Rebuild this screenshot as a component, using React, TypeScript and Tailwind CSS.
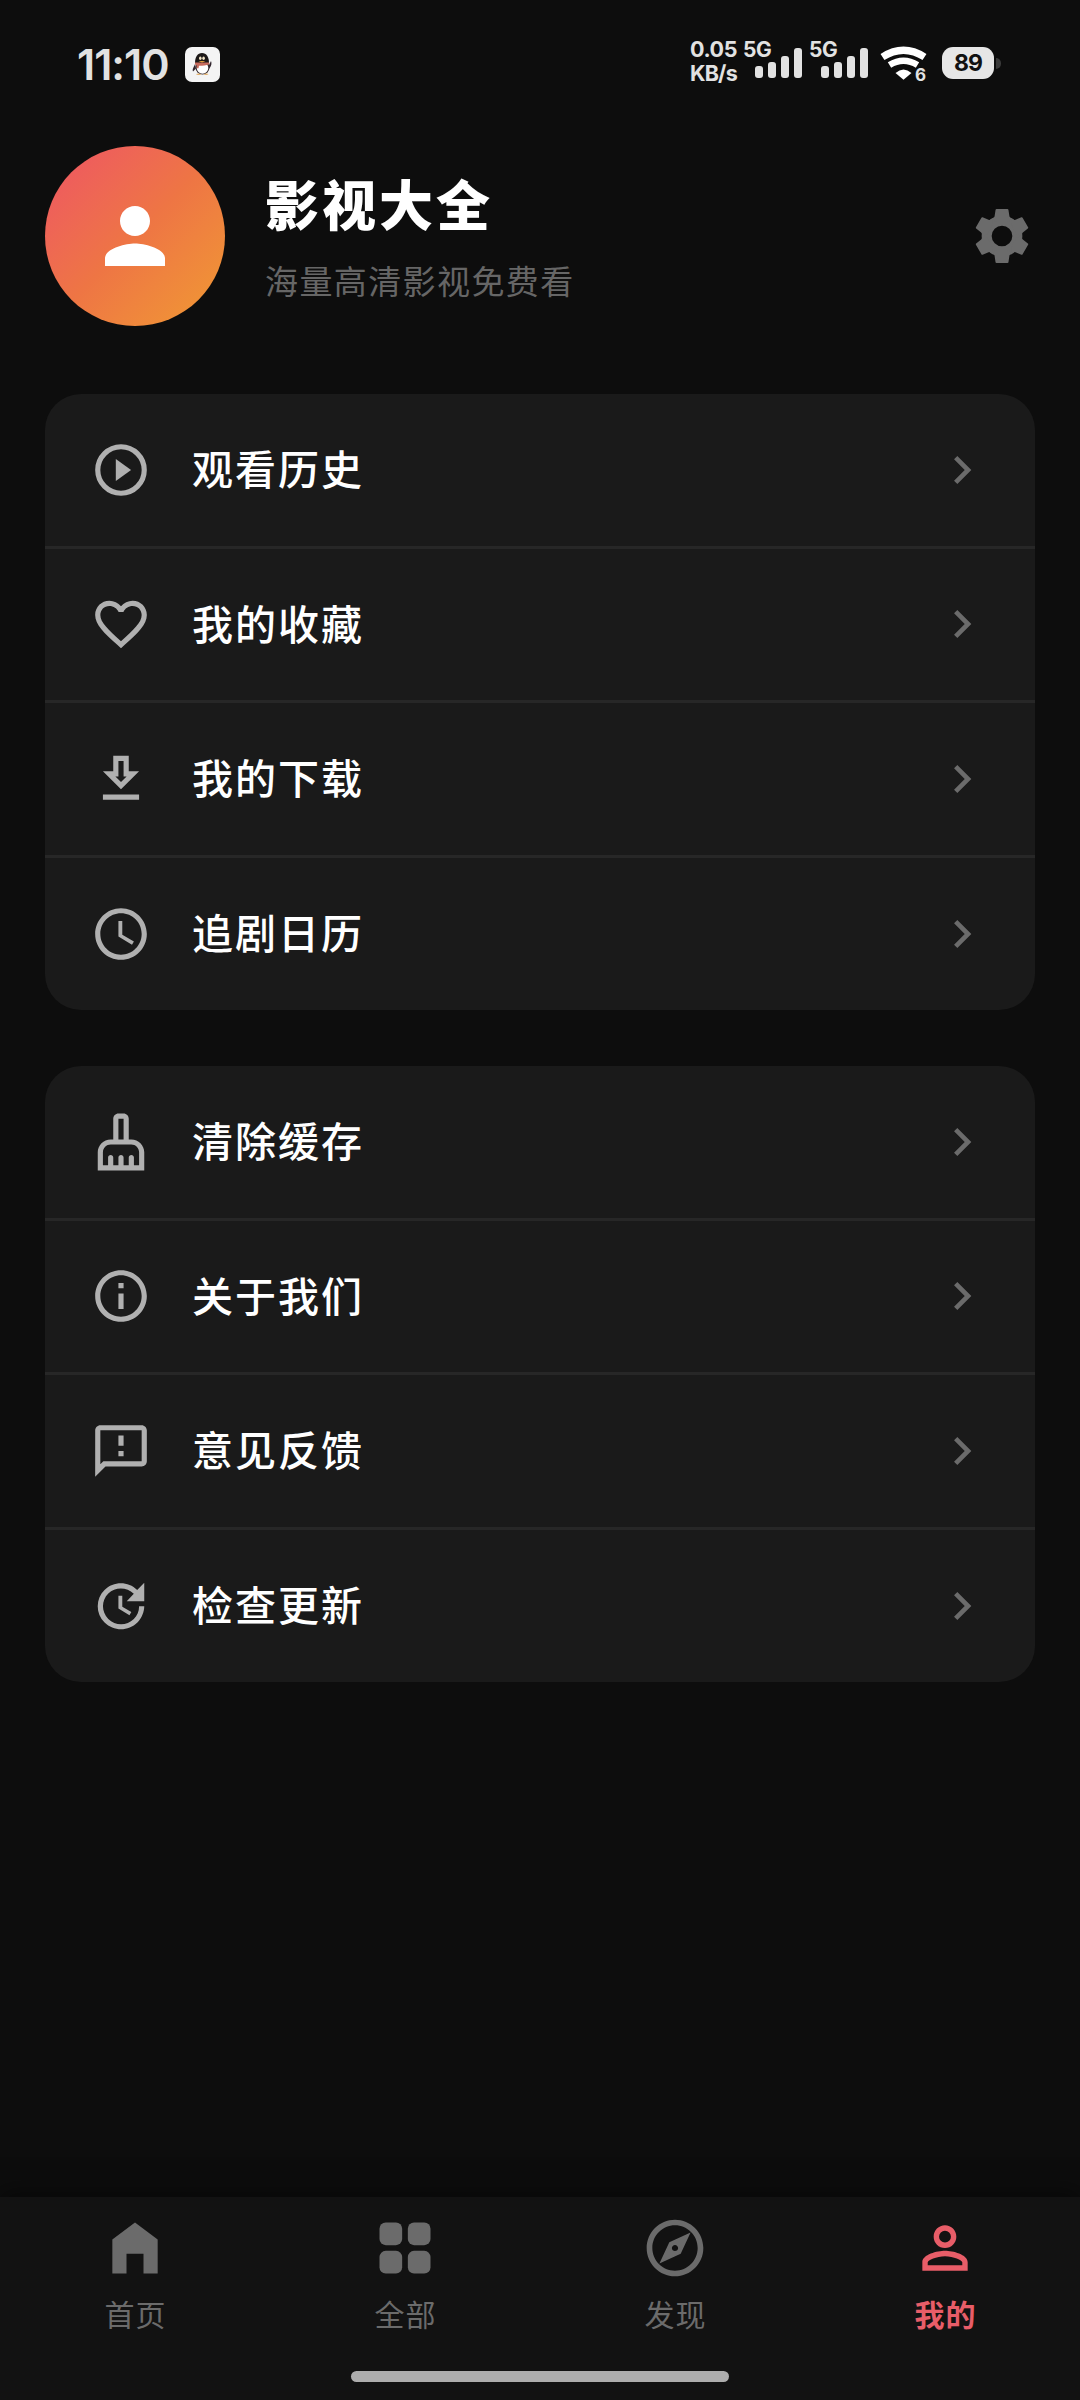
import type { ReactNode } from 'react';
import type { IconType } from 'react-icons';
import {
  MdAccessTime,
  MdChevronRight,
  MdFavoriteBorder,
  MdOutlineCleaningServices,
  MdOutlineExplore,
  MdOutlineFeedback,
  MdOutlineInfo,
  MdPerson,
  MdPersonOutline,
  MdUpdate,
} from 'react-icons/md';

interface MenuItem {
  label: string;
  icon: ReactNode;
}

function DownloadIcon() {
  return (
    <svg viewBox="0 0 24 24" fill="currentColor" className="size-[62px]">
      <path d="M19 9h-4V3H9v6H5l7 7 7-7zm-8 2V5h2v6h1.17L12 13.17 9.83 11H11zm-6 7h14v2H5z" />
    </svg>
  );
}

function PlayIcon() {
  return (
    <svg viewBox="0 0 24 24" className="size-[62px]">
      <circle cx="12" cy="12" r="9" fill="none" stroke="currentColor" strokeWidth="2" />
      <path d="M10 7.7v8.6l5.9-4.3z" fill="currentColor" />
    </svg>
  );
}

function GearIcon() {
  return (
    <svg viewBox="-12 -12 24 24" fill="currentColor" className="size-[66px] text-[#6b6b6b]">
      <circle r="5.58" fill="none" stroke="currentColor" strokeWidth="3.65" />
      {[0, 60, 120, 180, 240, 300].map((angle) => (
        <path key={angle} transform={`rotate(${angle})`} d="M-3.700-6.200Q-2.800-6.500-2.700-7.200L-2.350-9.500Q-2.300-9.800-2-9.800H2Q2.300-9.800 2.350-9.500L2.700-7.200Q2.800-6.500 3.700-6.200L2-5H-2z" />
      ))}
    </svg>
  );
}

function HomeIcon() {
  return (
    <svg viewBox="0 0 24 24" fill="currentColor" className="size-[68px]">
      <path d="M4 21V9l8-6 8 6v12h-5v-7H9v7z" />
    </svg>
  );
}

function GridIcon() {
  return (
    <svg viewBox="0 0 24 24" fill="currentColor" className="size-[68px]">
      <rect x="3" y="3" width="8" height="8" rx="2.2" />
      <rect x="13" y="3" width="8" height="8" rx="2.2" />
      <rect x="3" y="13" width="8" height="8" rx="2.2" />
      <rect x="13" y="13" width="8" height="8" rx="2.2" />
    </svg>
  );
}

function PenguinIcon() {
  return (
    <svg viewBox="0 0 35 35" className="size-[35px]">
      <rect width="35" height="35" rx="7" fill="#f4f4f4" />
      <path d="M10 17c-1 3-3 5-2 7.500l3-3zM24 18l2-4c1 2 .5 5-2 8z" fill="#30242c" />
      <ellipse cx="17.5" cy="20.5" rx="7" ry="7" fill="#33272b" />
      <ellipse cx="17.5" cy="21" rx="5.800" ry="5.800" fill="#fff" />
      <path d="M10 16c0-6 2.500-10 7-10s7 4 7 10z" fill="#1d1918" />
      <path d="M10 15.500h14l.5 1.700c-4 1.300-8 1.600-10.500 1.500l-.5 2.500h-1.700l-.3-3-1.500-.8z" fill="#c76a5c" />
      <ellipse cx="15.300" cy="11.300" rx="1.300" ry="1.700" fill="#f3e6c8" />
      <ellipse cx="18.600" cy="11.300" rx="1.300" ry="1.700" fill="#f3e6c8" />
      <path d="M13.500 14h7l-3.500 1.400z" fill="#e0a13c" />
      <path d="M11 27c2-1 4-.5 5.500.3-1.500 1-4.500 1-5.500-.3zM18.500 27.300c1.500-.8 3.500-1.300 5-.3-1 1.300-4 1.300-5 .3z" fill="#e3b06a" />
    </svg>
  );
}

function Signal() {
  return (
    <div className="relative flex h-[40px] w-[59px] items-end justify-end gap-[5px] pb-[2px]">
      <span className="absolute -top-px left-0 text-[21px] leading-[22px] font-bold tracking-[-0.5px]">5G</span>
      <i className="h-[12px] w-[8px] rounded-[3px] bg-[#e2e2e2]" />
      <i className="h-[16px] w-[8px] rounded-[3px] bg-[#e2e2e2]" />
      <i className="h-[22px] w-[8px] rounded-[3px] bg-[#e2e2e2]" />
      <i className="h-[30px] w-[8px] rounded-[3px] bg-[#e2e2e2]" />
    </div>
  );
}

function StatusBar() {
  return (
    <header className="flex h-[146px] items-start justify-between pt-[38px] pr-[79px] pl-[77px] font-['Inter',sans-serif] text-[#e2e2e2]">
      <div className="flex items-center gap-[18px] pt-[2px]">
        <span className="w-[90px] text-[43px] leading-[48px] font-semibold tracking-[-1px] whitespace-nowrap">11:10</span>
        <PenguinIcon />
      </div>
      <div className="flex items-start pt-[2px]">
        <div className="-mt-[2px] w-[53px] text-[21.500px] leading-[23.500px] font-bold tracking-[-0.4px] whitespace-nowrap">
          <div>0.05</div>
          <div className="tracking-[-0.8px]">KB/s</div>
        </div>
        <Signal />
        <div className="w-[7px]" />
        <Signal />
        <div className="relative ml-[12px] h-[42px] w-[50px]">
          <svg viewBox="0 0 50 42" className="h-[42px] w-[50px]" fill="none" stroke="#fff">
            <path d="M2.500 17Q23.500 3.500 44.500 17" strokeWidth="7.2" />
            <path d="M9.500 25Q23.500 16.500 37.500 25" strokeWidth="6.5" />
            <path d="M15.500 33Q23.500 26 31.500 33L23.500 39.700z" fill="#fff" stroke="none" />
          </svg>
          <span className="absolute right-[4px] bottom-[-3px] text-[17px] leading-[20px] font-bold">6</span>
        </div>
        <div className="mt-[7px] ml-[12px] flex items-center gap-[2px]">
          <div className="flex h-[32px] w-[52px] items-center justify-center rounded-[11px] bg-[#e6e6e6] text-[23px] font-bold tracking-[-1px] text-[#111]">
            89
          </div>
          <div className="h-[11px] w-[5px] rounded-r-full bg-[#3a3a3a]" />
        </div>
      </div>
    </header>
  );
}

function MenuCard({ items, className }: { items: MenuItem[]; className: string }) {
  return (
    <section className={`mx-[45px] h-[616px] overflow-hidden rounded-[36px] bg-[#1a1a1a] ${className}`}>
      {items.map((item) => (
        <div
          key={item.label}
          className="flex h-[154.5px] items-center border-b-[3px] border-[#272727] pr-[45px] pl-[45px] text-[#b0b0b0] last:h-[152.5px] last:border-b-0"
        >
          {item.icon}
          <span className="mb-[5px] ml-[40px] flex-1 text-[41px] leading-[60px] font-medium tracking-[2px] text-white">{item.label}</span>
          <MdChevronRight className="size-[56px] text-[#6b6b6b]" />
        </div>
      ))}
    </section>
  );
}

const menuIcon = (Icon: IconType) => <Icon className="size-[62px]" />;

const library: MenuItem[] = [
  { label: '观看历史', icon: <PlayIcon /> },
  { label: '我的收藏', icon: menuIcon(MdFavoriteBorder) },
  { label: '我的下载', icon: <DownloadIcon /> },
  { label: '追剧日历', icon: menuIcon(MdAccessTime) },
];

const system: MenuItem[] = [
  { label: '清除缓存', icon: menuIcon(MdOutlineCleaningServices) },
  { label: '关于我们', icon: menuIcon(MdOutlineInfo) },
  { label: '意见反馈', icon: menuIcon(MdOutlineFeedback) },
  { label: '检查更新', icon: menuIcon(MdUpdate) },
];

const tabs = [
  { label: '首页', icon: <HomeIcon /> },
  { label: '全部', icon: <GridIcon /> },
  { label: '发现', icon: <MdOutlineExplore className="size-[68px]" /> },
  { label: '我的', icon: <MdPersonOutline className="size-[68px]" />, active: true },
];

export default function App() {
  return (
    <div className="flex h-[2400px] w-[1080px] flex-col overflow-hidden bg-[#0d0d0d] font-['Noto_Sans_CJK_SC',sans-serif]">
      <StatusBar />

      <div className="flex h-[180px] items-center px-[45px]">
        <div className="flex size-[180px] items-center justify-center rounded-full bg-linear-to-br from-[#ee5363] via-[#ee7544] to-[#f09a30]">
          <MdPerson className="size-[90px] text-white" />
        </div>
        <div className="mb-[5px] ml-[40px] flex-1">
          <h1 className="text-[54px] leading-[78px] font-black tracking-[3px] text-white">影视大全</h1>
          <p className="mt-[14px] text-[33px] leading-[48px] tracking-[1.400px] text-[#666]">海量高清影视免费看</p>
        </div>
        <GearIcon />
      </div>

      <MenuCard items={library} className="mt-[68px]" />
      <MenuCard items={system} className="mt-[56px]" />

      <nav className="mt-auto flex h-[203px] flex-col items-center bg-[#121212] shadow-[0_-4px_24px_rgba(0,0,0,0.5)]">
        <div className="flex w-full pt-[17px]">
          {tabs.map((tab) => (
            <div
              key={tab.label}
              className={`flex flex-1 flex-col items-center ${tab.active ? 'font-bold text-[#e85d68]' : 'text-[#6b6b6b]'}`}
            >
              {tab.icon}
              <span className="mt-[9px] mb-px pl-px text-[30px] leading-[44px] tracking-[1px]">{tab.label}</span>
            </div>
          ))}
        </div>
        <div className="mt-[35px] h-[11px] w-[378px] rounded-full bg-[#adadad]" />
      </nav>
    </div>
  );
}
